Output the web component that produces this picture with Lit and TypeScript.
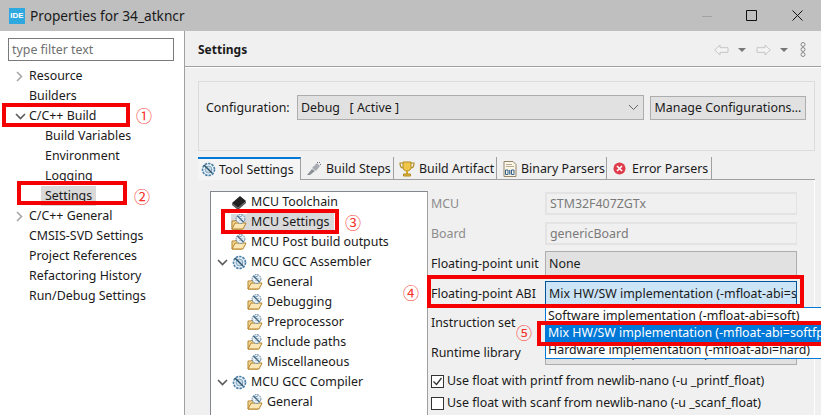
import { LitElement, css, html, svg } from 'lit';
import { customElement } from 'lit/decorators.js';

const chevronRight = svg`<svg width="9" height="11" viewBox="0 0 9 11"><path d="M2 1l4.5 4.5L2 10" fill="none" stroke="#a6a6a6" stroke-width="1.6"/></svg>`;
const chevronDown = svg`<svg width="11" height="9" viewBox="0 0 11 9"><path d="M1 2l4.5 4.5L10 2" fill="none" stroke="#595959" stroke-width="1.6"/></svg>`;

const gear = svg`<svg width="15" height="15" viewBox="0 0 15 15">
  <circle cx="7.5" cy="7.5" r="6" fill="#eaf2f8" stroke="#4a7fa8" stroke-width="1.6" stroke-dasharray="2.4 1"/>
  <circle cx="7.5" cy="7.5" r="3.4" fill="#c9dcea" stroke="#7fa5c2"/>
  <path d="M3 3l8 8" stroke="#33566f" stroke-width="1.6"/><path d="M8 10l3-3" stroke="#8a9aa8"/>
</svg>`;

const folderGear = svg`<svg width="16" height="16" viewBox="0 0 16 16">
  <path d="M1 15V7h3l1-1h6v9z" fill="#f6d998" stroke="#b5832a"/>
  <path d="M1 15l3-6h11l-3 6z" fill="#fbe6b4" stroke="#b5832a"/>
  <circle cx="9.5" cy="5" r="4.4" fill="#e9f0f6" stroke="#54809f" stroke-dasharray="1.8 .8"/>
  <path d="M6.5 2l6 6" stroke="#3b5f7a" stroke-width="1.3"/><path d="M8 3l3-1M8.500 7l3-3" stroke="#88a3b8"/>
</svg>`;

const chip = svg`<svg width="16" height="15" viewBox="0 0 16 15">
  <path d="M1 8l8-7 6 5-8 7z" fill="#222"/><path d="M1 8v2l6 5v-2zM7 13v2l8-7V6z" fill="#555"/>
</svg>`;

const brush = svg`<svg width="16" height="15" viewBox="0 0 16 15">
  <path d="M1 14l5-6 3 2-5 4z" fill="#8b8f96"/><path d="M6 7l5-5 3 3-4 5z" fill="#a7acb3"/><path d="M11 1l1 1M14 3l1 1M13 1l1 1" stroke="#6f747b"/>
</svg>`;

const trophy = svg`<svg width="16" height="16" viewBox="0 0 16 16">
  <path d="M4 1h8v5c0 3-2 4-4 4s-4-1-4-4z" fill="#f0c64a" stroke="#b18a1e"/>
  <path d="M4 2H1c0 3 1 5 3 5M12 2h3c0 3-1 5-3 5" fill="none" stroke="#b18a1e" stroke-width="1.2"/>
  <path d="M7 10h2v3H7z" fill="#d6a92d"/><path d="M4.500 13h7v2h-7z" fill="#e5b937" stroke="#b18a1e"/>
</svg>`;

const binary = svg`<svg width="14" height="16" viewBox="0 0 14 16">
  <path d="M1 .5h9l3 3v12H1z" fill="#fbf6e5" stroke="#94856a"/>
  <path d="M3 3.500h6M3 5.500h8" stroke="#b7ac93"/>
  <path d="M2.500 9h2.500v4.500H2.500zM8.500 9h2.500v4.500H8.500z" fill="none" stroke="#33608c"/><path d="M6.800 9v4.500" stroke="#33608c" stroke-width="1.200"/>
</svg>`;

const errorIcon = svg`<svg width="13" height="13" viewBox="0 0 13 13">
  <circle cx="6.500" cy="6.500" r="6" fill="#df3c4b"/><path d="M4 4l5 5M9 4l-5 5" stroke="#fff" stroke-width="1.600"/>
</svg>`;

const navArrow = svg`<svg width="15" height="12" viewBox="0 0 15 12">
  <path d="M.7 6L6 1v2.700h8v4.600H6V11z" fill="#f4f4f4" stroke="#c4c4c4"/>
</svg>`;

const sideTree = [
  { label: 'Resource', depth: 0, arrow: 'right' },
  { label: 'Builders', depth: 0 },
  { label: 'C/C++ Build', depth: 0, arrow: 'down' },
  { label: 'Build Variables', depth: 1 },
  { label: 'Environment', depth: 1 },
  { label: 'Logging', depth: 1 },
  { label: 'Settings', depth: 1, selected: true },
  { label: 'C/C++ General', depth: 0, arrow: 'right' },
  { label: 'CMSIS-SVD Settings', depth: 0 },
  { label: 'Project References', depth: 0 },
  { label: 'Refactoring History', depth: 0 },
  { label: 'Run/Debug Settings', depth: 0 },
];

const toolTree = [
  { label: 'MCU Toolchain', depth: 0, icon: chip },
  { label: 'MCU Settings', depth: 0, icon: folderGear, selected: true },
  { label: 'MCU Post build outputs', depth: 0, icon: folderGear },
  { label: 'MCU GCC Assembler', depth: 0, icon: gear, arrow: true },
  { label: 'General', depth: 1, icon: folderGear },
  { label: 'Debugging', depth: 1, icon: folderGear },
  { label: 'Preprocessor', depth: 1, icon: folderGear },
  { label: 'Include paths', depth: 1, icon: folderGear },
  { label: 'Miscellaneous', depth: 1, icon: folderGear },
  { label: 'MCU GCC Compiler', depth: 0, icon: gear, arrow: true },
  { label: 'General', depth: 1, icon: folderGear },
];

const tabs = [
  { label: 'Tool Settings', icon: gear, active: true },
  { label: 'Build Steps', icon: brush },
  { label: 'Build Artifact', icon: trophy },
  { label: 'Binary Parsers', icon: binary },
  { label: 'Error Parsers', icon: errorIcon },
];

// red markup drawn over the screenshot: [left, top, width, height]
const boxes = [
  [2, 103, 128, 24],
  [17, 181, 110, 24],
  [221, 209, 118, 25],
  [427, 275, 377, 33],
  [537, 321, 290, 25],
];

const marks = [
  ['①', 136, 115],
  ['②', 134, 196],
  ['③', 345, 222],
  ['④', 403, 292],
  ['⑤', 516, 332],
];

@customElement('app-root')
export class AppRoot extends LitElement {
  static styles = css`
    :host {
      display: block;
      position: relative;
      width: 821px;
      height: 415px;
      overflow: hidden;
      background: #f0f0f0;
      color: #1a1a1a;
      font: 12.4px/20px "Noto Sans", sans-serif;
    }
    .titlebar {
      height: 31px;
      background: #bfbfbf;
      display: flex;
      align-items: center;
      padding-left: 9px;
    }
    .logo {
      width: 16px;
      height: 16px;
      background: #2ea9e0;
      color: #fff;
      font: bold 8px/16px "Liberation Sans", sans-serif;
      text-align: center;
      margin-right: 5px;
    }
    .title {
      flex: 1;
      font-size: 13.7px;
    }
    .winbtns {
      display: flex;
      align-items: center;
    }
    .winbtns svg {
      display: block;
    }
    .win-min {
      margin-right: 34px;
    }
    .win-max {
      margin-right: 35px;
    }
    .win-close {
      margin-right: 18px;
    }
    .body {
      display: flex;
      height: 384px;
    }
    .sidebar {
      width: 185px;
      box-sizing: border-box;
      background: #fff;
      border-right: 1px solid #a0a0a0;
      padding: 7px 0 0 8px;
      flex: none;
    }
    .filter {
      width: 166px;
      height: 23px;
      box-sizing: border-box;
      border: 1px solid #7a7a7a;
      padding-left: 3px;
      color: #707070;
      line-height: 21px;
      margin-bottom: 5px;
    }
    .srow {
      height: 20px;
      display: flex;
      align-items: center;
      white-space: nowrap;
    }
    .srow .arrow {
      width: 21px;
      flex: none;
      display: flex;
      padding-left: 7px;
      box-sizing: border-box;
    }
    .srow.d1 {
      padding-left: 37px;
    }
    .srow.noarrow {
      padding-left: 21px;
    }
    .srow.selected span {
      background: #d9d9d9;
      padding: 0 4px;
      margin-left: -4px;
    }
    .main {
      flex: 1;
      min-width: 0;
    }
    .header {
      height: 36px;
      box-sizing: border-box;
      border-bottom: 1px solid #a0a0a0;
      box-shadow: 0 1px 0 #fff;
      display: flex;
      align-items: center;
      padding-left: 13px;
    }
    .header b {
      flex: 1;
      font-size: 12px;
      padding-top: 3px;
    }
    .nav {
      display: flex;
      align-items: center;
      margin-right: 15px;
      padding-top: 2px;
    }
    .nav svg {
      display: block;
    }
    .nav-back {
      margin-right: 9px;
    }
    .nav-forward {
      transform: scaleX(-1);
      margin-right: 9px;
    }
    .tri {
      width: 0;
      height: 0;
      border: 4px solid transparent;
      border-top: 4px solid #777;
      border-bottom: 0;
      margin-right: 10px;
    }
    .tri.last {
      margin-right: 12px;
    }
    .content {
      padding: 14px 6px 0 13px;
    }
    .group {
      height: 70px;
      box-sizing: border-box;
      border: 1px solid #dcdcdc;
      padding: 13px 0 0 7px;
      display: flex;
      align-items: flex-start;
    }
    .group label {
      width: 91px;
      line-height: 25px;
    }
    .select {
      box-sizing: border-box;
      height: 25px;
      background: #e1e1e1;
      border: 1px solid #adadad;
      padding-left: 3px;
      line-height: 23px;
      display: flex;
      align-items: center;
      justify-content: space-between;
      white-space: pre;
    }
    .group .select {
      width: 347px;
      padding-right: 4px;
    }
    .button {
      margin-left: 6px;
      width: 156px;
      height: 24px;
      box-sizing: border-box;
      border: 1px solid #adadad;
      background: #e1e1e1;
      text-align: center;
      line-height: 22px;
      margin-top: 1px;
      white-space: nowrap;
    }
    .tabs {
      display: flex;
      height: 22px;
      margin-top: 6px;
      border-bottom: 1px solid #a0a0a0;
    }
    .tab {
      display: flex;
      align-items: center;
      gap: 3px;
      height: 22px;
      padding: 1px 0 0 5px;
      box-sizing: border-box;
      border-right: 1px solid #a0a0a0;
      white-space: nowrap;
    }
    .tab:nth-child(2) {
      width: 93px;
      gap: 4px;
    }
    .tab:nth-child(3) {
      width: 103px;
      padding-left: 5px;
      gap: 4px;
    }
    .tab:nth-child(4) {
      width: 110px;
      padding-left: 6px;
      gap: 4px;
    }
    .tab:nth-child(5) {
      width: 105px;
      padding-left: 6px;
      gap: 6px;
    }
    .tab svg {
      flex: none;
    }
    .tab.active {
      width: 103px;
      padding-top: 0;
      padding-left: 3px;
      border-top: 2px solid #0078d7;
      height: 23px;
      background: #f5f5f5;
    }
    .panel {
      margin-left: 2px;
      padding: 11px 0 0 10px;
      display: flex;
      border-right: 1px solid #fff;
      height: 240px;
      box-sizing: border-box;
    }
    .tree {
      width: 218px;
      flex: none;
      height: 260px;
      box-sizing: border-box;
      background: #fff;
      border: 1px solid #828790;
      border-right-color: #a0a0a0;
    }
    .trow {
      height: 20px;
      display: flex;
      align-items: center;
      white-space: nowrap;
    }
    .trow .caret {
      width: 21px;
      padding-left: 6px;
      box-sizing: border-box;
      flex: none;
      display: flex;
    }
    .trow svg {
      flex: none;
    }
    .trow .label {
      margin-left: 3px;
      padding: 0 1px;
    }
    .trow.selected .label {
      background: #d9d9d9;
      padding-right: 4px;
      margin-left: 0;
      padding-left: 4px;
    }
    .trow.selected .icon {
      background: #d9d9d9;
    }
    .trow.top {
      padding-left: 20px;
    }
    .trow.top.open {
      padding-left: 0;
    }
    .trow.d1 {
      padding-left: 36px;
    }
    .icon {
      display: flex;
    }
    .form {
      flex: 1;
      min-width: 0;
      padding: 0 0 0 3px;
    }
    .frow {
      display: flex;
      align-items: center;
      height: 25px;
      margin-bottom: 5px;
      position: relative;
    }
    .frow.tight {
      margin-bottom: 4px;
    }
    .frow > label {
      width: 114px;
      flex: none;
      white-space: nowrap;
    }
    .frow > label.disabled {
      color: #8c8c8c;
    }
    .readonly {
      width: 252px;
      height: 23px;
      box-sizing: border-box;
      border: 2px solid #e3e3e3;
      border-right-width: 1px;
      padding-left: 3px;
      color: #7a7a7a;
      line-height: 19px;
    }
    .frow .select {
      width: 252px;
      overflow: hidden;
    }
    .select.focus {
      background: #cce4f7;
      border-color: #005499;
    }
    .dropdown {
      position: absolute;
      left: 114px;
      top: 26px;
      width: 290px;
      height: 52px;
      box-sizing: border-box;
      background: #fff;
      border: 1px solid #0078d7;
      border-right: 0;
      z-index: 1;
    }
    .option {
      height: 16px;
      line-height: 16px;
      padding-left: 2px;
      white-space: nowrap;
      overflow: hidden;
    }
    .option.hot {
      height: 19px;
      line-height: 19px;
      margin-top: -1px;
      background: #0078d7;
      color: #fff;
    }
    .check {
      display: flex;
      align-items: center;
      height: 16px;
      white-space: nowrap;
      margin-top: 6px;
    }
    .check.first {
      margin-top: 8px;
    }
    .box {
      width: 13px;
      height: 13px;
      box-sizing: border-box;
      border: 1px solid #333;
      background: #fff;
      margin-right: 3px;
      flex: none;
      display: flex;
    }
    .redbox {
      position: absolute;
      box-sizing: border-box;
      border: 4px solid #f50000;
      z-index: 2;
    }
    .mark {
      position: absolute;
      color: #f4332c;
      font: 16px/16px "Noto Sans CJK SC", sans-serif;
      transform: translateY(-50%);
      z-index: 2;
    }
  `;

  private renderSideRow(row: (typeof sideTree)[number]) {
    const cls = `srow ${row.depth ? 'd1' : ''} ${!row.depth && !row.arrow ? 'noarrow' : ''} ${row.selected ? 'selected' : ''}`;
    return html`<div class=${cls}>
      ${row.arrow
        ? html`<div class="arrow">${row.arrow === 'down' ? chevronDown : chevronRight}</div>`
        : ''}
      <span>${row.label}</span>
    </div>`;
  }

  private renderToolRow(row: (typeof toolTree)[number]) {
    const cls = `trow ${row.depth ? 'd1' : 'top'} ${row.arrow ? 'open' : ''} ${row.selected ? 'selected' : ''}`;
    return html`<div class=${cls}>
      ${row.arrow ? html`<div class="caret">${chevronDown}</div>` : ''}
      <div class="icon">${row.icon}</div>
      <span class="label">${row.label}</span>
    </div>`;
  }

  render() {
    return html`
      <div class="titlebar">
        <div class="logo">IDE</div>
        <div class="title">Properties for 34_atkncr</div>
        <div class="winbtns">
          <svg class="win-min" width="10" height="10" viewBox="0 0 10 10"><path d="M0 5.500h10" stroke="#a3a3a3"/></svg>
          <svg class="win-max" width="11" height="11" viewBox="0 0 11 11"><path d="M.5.500h10v10H.5z" fill="none" stroke="#111"/></svg>
          <svg class="win-close" width="11" height="11" viewBox="0 0 11 11"><path d="M.5.500l10 10M10.500.500l-10 10" stroke="#111"/></svg>
        </div>
      </div>
      <div class="body">
        <div class="sidebar">
          <div class="filter">type filter text</div>
          ${sideTree.map((r) => this.renderSideRow(r))}
        </div>
        <div class="main">
          <div class="header">
            <b>Settings</b>
            <div class="nav">
              <span class="nav-back">${navArrow}</span>
              <div class="tri"></div>
              <span class="nav-forward">${navArrow}</span>
              <div class="tri last"></div>
              <svg width="6" height="15" viewBox="0 0 6 15"><g fill="none" stroke="#8a8a8a"><circle cx="3" cy="2.500" r="2"/><circle cx="3" cy="7.500" r="2"/><circle cx="3" cy="12.500" r="2"/></g></svg>
            </div>
          </div>
          <div class="content">
            <div class="group">
              <label>Configuration:</label>
              <div class="select">
                <span>Debug   [ Active ]</span>
                <svg width="11" height="7" viewBox="0 0 11 7"><path d="M1 1l4.500 4.500L10 1" fill="none" stroke="#666"/></svg>
              </div>
              <div class="button">Manage Configurations...</div>
            </div>
            <div class="tabs">
              ${tabs.map(
                (t) => html`<div class="tab ${t.active ? 'active' : ''}">${t.icon}<span>${t.label}</span></div>`
              )}
            </div>
            <div class="panel">
              <div class="tree">${toolTree.map((r) => this.renderToolRow(r))}</div>
              <div class="form">
                <div class="frow">
                  <label class="disabled">MCU</label>
                  <div class="readonly">STM32F407ZGTx</div>
                </div>
                <div class="frow">
                  <label class="disabled">Board</label>
                  <div class="readonly">genericBoard</div>
                </div>
                <div class="frow">
                  <label>Floating-point unit</label>
                  <div class="select">None</div>
                </div>
                <div class="frow tight">
                  <label>Floating-point ABI</label>
                  <div class="select focus">Mix HW/SW implementation (-mfloat-abi=softfp)</div>
                  <div class="dropdown">
                    <div class="option">Software implementation (-mfloat-abi=soft)</div>
                    <div class="option hot">Mix HW/SW implementation (-mfloat-abi=softfp)</div>
                    <div class="option">Hardware implementation (-mfloat-abi=hard)</div>
                  </div>
                </div>
                <div class="frow">
                  <label>Instruction set</label>
                  <div class="select">Thumb2</div>
                </div>
                <div class="frow tight">
                  <label>Runtime library</label>
                  <div class="select">Reduced C (--specs=nano.specs)</div>
                </div>
                <div class="check first">
                  <div class="box">
                    <svg width="11" height="11" viewBox="0 0 11 11"><path d="M1.500 5.500l3 3L9.500 2" fill="none" stroke="#333" stroke-width="1.300"/></svg>
                  </div>
                  Use float with printf from newlib-nano (-u _printf_float)
                </div>
                <div class="check">
                  <div class="box"></div>
                  Use float with scanf from newlib-nano (-u _scanf_float)
                </div>
              </div>
            </div>
          </div>
        </div>
      </div>
      ${boxes.map(
        ([l, t, w, h]) =>
          html`<div class="redbox" style="left:${l}px;top:${t}px;width:${w}px;height:${h}px"></div>`
      )}
      ${marks.map(
        ([c, l, t]) => html`<div class="mark" style="left:${l}px;top:${t}px">${c}</div>`
      )}
    `;
  }
}
